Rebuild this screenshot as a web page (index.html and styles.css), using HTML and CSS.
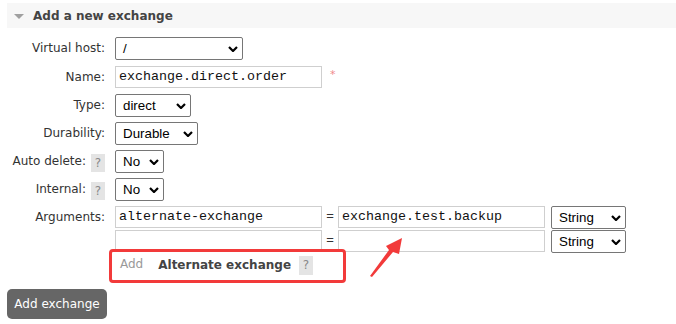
FILE: index.html
```html
<!DOCTYPE html>
<html>
<head>
<meta charset="utf-8">
<link rel="stylesheet" href="styles.css">
</head>
<body>
<div class="page">
  <div class="section-head">
    <span class="tri"></span>
    <h2 class="title">Add a new exchange</h2>
  </div>
  <div class="form">
    <div class="row row-first">
      <div class="label">Virtual host:</div>
      <div class="select w-vhost"><span>/</span><svg class="chev" viewBox="0 0 10 6"><polyline points="1,1 5,5 9,1"/></svg></div>
    </div>
    <div class="row">
      <div class="label label-input">Name:</div>
      <div class="input w-text">exchange.direct.order</div>
      <span class="req">*</span>
    </div>
    <div class="row">
      <div class="label">Type:</div>
      <div class="select w-type"><span>direct</span><svg class="chev" viewBox="0 0 10 6"><polyline points="1,1 5,5 9,1"/></svg></div>
    </div>
    <div class="row">
      <div class="label">Durability:</div>
      <div class="select w-dur"><span>Durable</span><svg class="chev" viewBox="0 0 10 6"><polyline points="1,1 5,5 9,1"/></svg></div>
    </div>
    <div class="row">
      <div class="label">Auto delete:<span class="help">?</span></div>
      <div class="select w-no"><span>No</span><svg class="chev" viewBox="0 0 10 6"><polyline points="1,1 5,5 9,1"/></svg></div>
    </div>
    <div class="row">
      <div class="label">Internal:<span class="help">?</span></div>
      <div class="select w-no"><span>No</span><svg class="chev" viewBox="0 0 10 6"><polyline points="1,1 5,5 9,1"/></svg></div>
    </div>
    <div class="args">
      <div class="label label-input">Arguments:</div>
      <div class="args-body">
        <div class="arg-row">
          <div class="input w-text">alternate-exchange</div>
          <span class="eq">=</span>
          <div class="input w-text">exchange.test.backup</div>
          <div class="select w-str"><span>String</span><svg class="chev" viewBox="0 0 10 6"><polyline points="1,1 5,5 9,1"/></svg></div>
        </div>
        <div class="arg-row">
          <div class="input w-text"></div>
          <span class="eq">=</span>
          <div class="input w-text"></div>
          <div class="select w-str"><span>String</span><svg class="chev" viewBox="0 0 10 6"><polyline points="1,1 5,5 9,1"/></svg></div>
        </div>
        <div class="add-row">
          <span class="add">Add</span>
          <span class="alt">Alternate exchange</span>
          <span class="help">?</span>
        </div>
      </div>
    </div>
  </div>
  <button class="btn">Add exchange</button>
  <div class="mark-box"></div>
  <svg class="mark-arrow" width="676" height="324" viewBox="0 0 676 324"><polygon points="370,276 389,250 386,246 402,238 399,254 393,252 372,277"/></svg>
</div>
</body>
</html>
```

FILE: styles.css
```css
html, body {
  margin: 0;
  padding: 0;
  background: #fff;
}
body {
  font-family: "DejaVu Sans", Verdana, sans-serif;
  font-size: 12px;
  color: #333;
}
.page {
  position: relative;
  width: 676px;
  height: 324px;
  overflow: hidden;
  padding-top: 3px;
  box-sizing: border-box;
}
.section-head {
  margin-left: 7px;
  height: 25px;
  background: #f7f7f7;
  display: flex;
  align-items: center;
  padding-left: 7px;
}
.tri {
  width: 0;
  height: 0;
  border-left: 5px solid transparent;
  border-right: 5px solid transparent;
  border-top: 5px solid #a0a0a0;
  margin-right: 9px;
  margin-top: 1px;
}
.title {
  margin: 0;
  font-size: 12px;
  font-weight: bold;
  color: #444;
}
.form {
  margin-left: 7px;
  margin-top: 9px;
}
.row {
  display: flex;
  align-items: flex-start;
  height: 28px;
}
.row-first {
  height: 29px;
}
.label {
  width: 98px;
  margin-right: 10px;
  text-align: right;
  height: 23px;
  line-height: 23px;
  white-space: nowrap;
  display: flex;
  justify-content: flex-end;
  align-items: center;
}
.label-input {
  height: 22px;
  line-height: 22px;
}
.help {
  display: inline-block;
  width: 14px;
  height: 18px;
  line-height: 18px;
  text-align: center;
  background: #e4e4e4;
  color: #888;
  margin-left: 5px;
  margin-top: 3px;
}
.select {
  box-sizing: border-box;
  height: 23px;
  border: 1px solid #767676;
  border-radius: 2px;
  background: #fff;
  display: flex;
  align-items: center;
  justify-content: space-between;
  padding: 0 4px 0 7px;
  font-family: "Liberation Sans", Arial, sans-serif;
  font-size: 13.33px;
  color: #000;
}
.chev {
  width: 10px;
  height: 6px;
  fill: none;
  stroke: #000;
  stroke-width: 2.2;
}
.w-vhost { width: 128px; }
.w-type { width: 76px; }
.w-dur { width: 83px; }
.w-no { width: 49px; }
.w-str { width: 75px; margin-left: 6px; }
.input {
  box-sizing: border-box;
  height: 22px;
  border: 1px solid #cfcfcf;
  padding: 0 3px;
  line-height: 20px;
  font-family: "Liberation Mono", "Courier New", monospace;
  font-size: 13.33px;
  color: #111;
  background: #fff;
  white-space: nowrap;
  overflow: hidden;
}
.w-text { width: 207px; }
.req {
  color: #f08a8a;
  font-size: 11px;
  margin-left: 8px;
  margin-top: 2px;
}
.args {
  display: flex;
  align-items: flex-start;
}
.args-body {
  display: flex;
  flex-direction: column;
}
.arg-row {
  display: flex;
  align-items: flex-start;
  height: 24px;
}
.eq {
  width: 16px;
  text-align: center;
  line-height: 20px;
  font-family: "Liberation Sans", Arial, sans-serif;
  font-size: 13px;
  color: #333;
}
.add-row {
  display: flex;
  align-items: center;
  height: 20px;
  margin-top: 1px;
  padding-left: 5px;
}
.add {
  color: #999;
  margin-right: 15px;
  margin-top: -3px;
}
.alt {
  font-weight: bold;
  color: #444;
}
.add-row .help {
  margin-left: 8px;
  margin-top: 0;
  height: 19px;
  line-height: 19px;
}
.btn {
  display: block;
  margin: 14px 0 0 7px;
  width: 100px;
  height: 30px;
  border: none;
  border-radius: 5px;
  background: #666;
  color: #fff;
  font-family: "DejaVu Sans", Verdana, sans-serif;
  font-size: 12px;
  padding: 0;
}
.mark-box {
  position: absolute;
  left: 109px;
  top: 249px;
  width: 237px;
  height: 34px;
  box-sizing: border-box;
  border: 3px solid #f23a3a;
  border-radius: 4px;
}
.mark-arrow {
  position: absolute;
  left: 0;
  top: 0;
  fill: #f23a3a;
}
```
